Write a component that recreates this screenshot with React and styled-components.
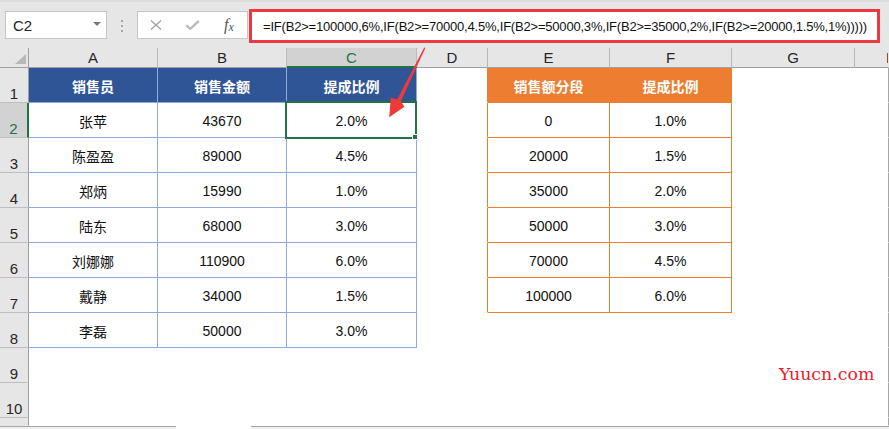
import React from 'react';
import styled, { createGlobalStyle } from 'styled-components';

const FONT = `"Liberation Sans", "Noto Sans CJK SC", sans-serif`;

const GlobalStyle = createGlobalStyle`
  html, body { margin: 0; padding: 0; background: #fff; }
  body { font-family: ${FONT}; }
`;

const Page = styled.div`
  position: relative;
  width: 889px;
  height: 429px;
  overflow: hidden;
  display: flex;
  flex-direction: column;
  background: #fff;
  font-family: ${FONT};
`;

/* ---------- toolbar ---------- */
const Toolbar = styled.div`
  box-sizing: border-box;
  height: 48px;
  flex: none;
  background: #e6e6e6;
  border-top: 2px solid #dcdcdc;
  display: flex;
  align-items: flex-start;
`;

const NameBox = styled.div`
  box-sizing: border-box;
  margin: 9px 0 0 5px;
  width: 102px;
  height: 28px;
  background: #fff;
  border: 1px solid #c6c6c6;
  display: flex;
  align-items: center;
  justify-content: space-between;
  padding: 0 5px 0 7px;
  font-size: 15px;
  color: #222;
`;

const Caret = styled.span`
  width: 0;
  height: 0;
  border-left: 4px solid transparent;
  border-right: 4px solid transparent;
  border-top: 4px solid #7a7a7a;
  margin-bottom: 2px;
`;

const Grip = styled.div`
  width: 30px;
  padding-top: 18px;
  display: flex;
  flex-direction: column;
  align-items: center;
  gap: 3px;
`;

const Dot = styled.span`
  width: 2px;
  height: 2px;
  background: #a8a8a8;
`;

const FxBox = styled.div`
  box-sizing: border-box;
  margin-top: 9px;
  width: 111px;
  height: 28px;
  background: #fff;
  border: 1px solid #c6c6c6;
  display: flex;
  align-items: center;
  padding-left: 12px;
  gap: 23px;
`;

const Fx = styled.span`
  font-family: "Liberation Serif", serif;
  font-style: italic;
  font-size: 16px;
  color: #555;
  line-height: 1;
  margin-left: 1px;
`;

const FxSub = styled.span`
  font-size: 12px;
  position: relative;
  top: 1px;
`;

const FormulaInput = styled.div`
  box-sizing: border-box;
  margin: 7px 0 0 1px;
  width: 631px;
  height: 34px;
  background: #fff;
  border: 3px solid #ee3740;
  display: flex;
  align-items: center;
  padding-left: 11px;
  font-size: 13px;
  letter-spacing: -0.2px;
  color: #111;
  white-space: nowrap;
  overflow: hidden;
`;

/* ---------- sheet grid ---------- */
const Sheet = styled.div`
  display: grid;
  grid-template-columns: 29px 129px 129px 130px 71px 122px 122px 123px 34px;
  grid-template-rows: 20px repeat(10, 35px) 8px;
  flex: none;
`;

const Corner = styled.div`
  box-sizing: border-box;
  background: #e6e6e6;
  border-right: 1px solid #9f9f9f;
  border-bottom: 1px solid #9f9f9f;
  display: flex;
  align-items: flex-end;
  justify-content: flex-end;
  padding: 0 2px 3px 0;
`;

const ColHead = styled.div`
  box-sizing: border-box;
  background: ${p => (p.$active ? '#d2d2d2' : '#e6e6e6')};
  color: ${p => (p.$active ? '#217346' : '#262626')};
  border-right: 1px solid ${p => (p.$edge ? 'transparent' : '#b9b9b9')};
  border-bottom: ${p => (p.$active ? '2px solid #217346' : '1px solid #9f9f9f')};
  display: flex;
  align-items: center;
  justify-content: ${p => (p.$edge ? 'flex-start' : 'center')};
  padding-left: ${p => (p.$edge ? '31px' : '0')};
  font-size: 15px;
  overflow: hidden;
`;

const RowHead = styled.div`
  box-sizing: border-box;
  background: ${p => (p.$active ? '#d2d2d2' : '#e6e6e6')};
  color: ${p => (p.$active ? '#217346' : '#262626')};
  border-right: ${p => (p.$active ? '2px solid #217346' : '1px solid #9f9f9f')};
  border-bottom: 1px solid ${p => (p.$stub ? 'transparent' : '#bfbfbf')};
  display: flex;
  justify-content: center;
  align-items: flex-end;
  font-size: 15px;
  line-height: 16px;
`;

const Cell = styled.div`
  position: relative;
  box-sizing: border-box;
  border-right: 1px solid ${p => p.$rb || 'transparent'};
  border-bottom: 1px solid ${p => p.$bb || 'transparent'};
  background: ${p => p.$fill || '#fff'};
  color: ${p => (p.$fill ? '#fff' : '#111')};
  font-weight: ${p => (p.$fill ? 700 : 400)};
  font-size: 14px;
  display: flex;
  align-items: center;
  justify-content: center;
  padding-top: 2px;
  white-space: nowrap;
`;

const Selection = styled.div`
  position: absolute;
  left: -2px;
  top: -2px;
  right: -1px;
  bottom: -2px;
  border: 2px solid #217346;
  z-index: 2;
  pointer-events: none;
`;

const FillHandle = styled.span`
  position: absolute;
  right: -3px;
  bottom: -3px;
  width: 6px;
  height: 6px;
  box-sizing: border-box;
  background: #217346;
  border: 1px solid #fff;
`;

/* ---------- bottom ---------- */
const BottomBar = styled.div`
  display: flex;
  height: 3px;
  flex: none;
`;

const BottomSeg = styled.div`
  box-sizing: border-box;
  width: ${p => (p.$w ? `${p.$w}px` : 'auto')};
  flex: ${p => (p.$w ? 'none' : '1')};
  border-top: 1px solid ${p => (p.$gap ? 'transparent' : '#a6a6a6')};
  background: ${p => (p.$gap ? '#fff' : '#f0f0f0')};
`;

/* ---------- overlays ---------- */
const ArrowSvg = styled.svg`
  position: absolute;
  left: 380px;
  top: 40px;
  z-index: 5;
`;

const Watermark = styled.div`
  position: absolute;
  left: 779px;
  top: 366px;
  font-family: "DejaVu Serif", "Liberation Serif", serif;
  font-size: 17.4px;
  line-height: 17px;
  color: #ef1b2d;
  z-index: 5;
`;

const BLUE = '#2f5597';
const BLUE_LINE = '#8eaadb';
const ORANGE = '#ed7d31';
const EDGE = '#a6a6a6';

const blueData = [
  ['销售员', '销售金额', '提成比例'],
  ['张苹', '43670', '2.0%'],
  ['陈盈盈', '89000', '4.5%'],
  ['郑炳', '15990', '1.0%'],
  ['陆东', '68000', '3.0%'],
  ['刘娜娜', '110900', '6.0%'],
  ['戴静', '34000', '1.5%'],
  ['李磊', '50000', '3.0%'],
];

const orangeData = [
  ['销售额分段', '提成比例'],
  ['0', '1.0%'],
  ['20000', '1.5%'],
  ['35000', '2.0%'],
  ['50000', '3.0%'],
  ['70000', '4.5%'],
  ['100000', '6.0%'],
];

const COLS = ['A', 'B', 'C', 'D', 'E', 'F', 'G', 'H'];

function renderRow(r) {
  const cells = [];
  const i = r - 1;
  cells.push(
    <RowHead key={`rh${r}`} $active={r === 2}>
      {r}
    </RowHead>
  );
  for (let c = 0; c < 3; c++) {
    const inTable = i < blueData.length;
    const isSel = r === 2 && c === 2;
    cells.push(
      <Cell
        key={`b${r}${c}`}
        $rb={inTable ? BLUE_LINE : undefined}
        $bb={inTable ? BLUE_LINE : undefined}
        $fill={inTable && r === 1 ? BLUE : undefined}
      >
        {inTable ? blueData[i][c] : ''}
        {isSel && (
          <Selection>
            <FillHandle />
          </Selection>
        )}
      </Cell>
    );
  }
  const inOrange = i < orangeData.length;
  cells.push(<Cell key={`d${r}`} $rb={inOrange ? ORANGE : undefined} />);
  for (let c = 0; c < 2; c++) {
    cells.push(
      <Cell
        key={`o${r}${c}`}
        $rb={inOrange ? ORANGE : undefined}
        $bb={inOrange ? ORANGE : undefined}
        $fill={inOrange && r === 1 ? ORANGE : undefined}
      >
        {inOrange ? orangeData[i][c] : ''}
      </Cell>
    );
  }
  cells.push(<Cell key={`g${r}`} />);
  cells.push(<Cell key={`h${r}`} $rb={EDGE} />);
  return cells;
}

export default function App() {
  const rows = [];
  for (let r = 1; r <= 10; r++) rows.push(...renderRow(r));

  return (
    <Page>
      <GlobalStyle />
      <Toolbar>
        <NameBox>
          C2
          <Caret />
        </NameBox>
        <Grip>
          <Dot />
          <Dot />
          <Dot />
        </Grip>
        <FxBox>
          <svg width="12" height="10" viewBox="0 0 12 10">
            <path d="M1 0.5 L11 9.5 M11 0.5 L1 9.5" stroke="#a3a3a3" strokeWidth="1.4" fill="none" />
          </svg>
          <svg width="15" height="10" viewBox="0 0 15 10">
            <path d="M1.2 5.2 L5.2 8.8 L13.8 1" stroke="#bdbdbd" strokeWidth="2.4" fill="none" />
          </svg>
          <Fx>
            f<FxSub>x</FxSub>
          </Fx>
        </FxBox>
        <FormulaInput>
          =IF(B2&gt;=100000,6%,IF(B2&gt;=70000,4.5%,IF(B2&gt;=50000,3%,IF(B2&gt;=35000,2%,IF(B2&gt;=20000,1.5%,1%)))))
        </FormulaInput>
      </Toolbar>

      <Sheet>
        <Corner>
          <svg width="11" height="10" viewBox="0 0 11 10">
            <polygon points="0,10 11,10 11,0" fill="#b8b8b8" />
          </svg>
        </Corner>
        {COLS.map(c => (
          <ColHead key={c} $active={c === 'C'} $edge={c === 'H'}>
            {c}
          </ColHead>
        ))}
        {rows}
        <RowHead $stub />
        {COLS.map(c => (
          <Cell key={`s${c}`} $rb={c === 'H' ? EDGE : undefined} />
        ))}
      </Sheet>

      <BottomBar>
        <BottomSeg $w={176} />
        <BottomSeg $w={75} $gap />
        <BottomSeg />
      </BottomBar>

      <ArrowSvg width="50" height="82" viewBox="0 0 50 82">
        <polygon
          points="44.2,7.5 45.4,8 20.8,61.2 24.5,66.8 9.2,77.2 10.8,57.6 17.2,59.4"
          fill="#f03a3a"
        />
      </ArrowSvg>

      <Watermark>Yuucn.com</Watermark>
    </Page>
  );
}
